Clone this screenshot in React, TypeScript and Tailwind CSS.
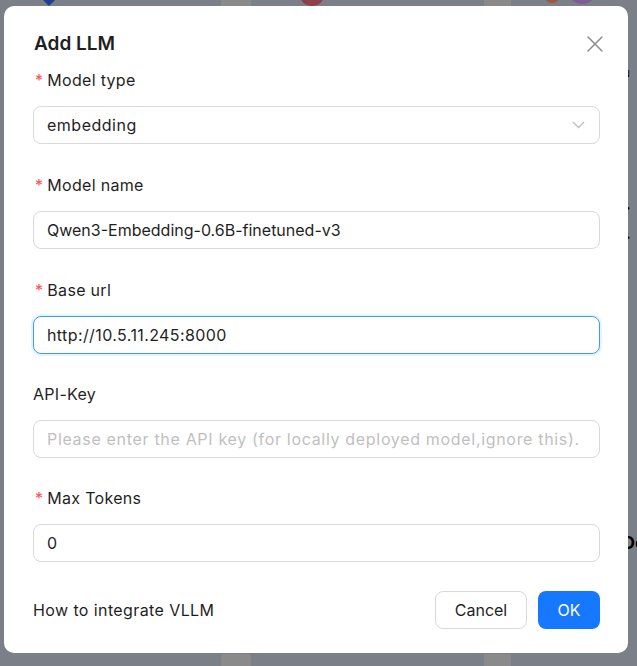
import React from "react";

const font = { fontFamily: "Inter, 'Noto Sans', sans-serif" };

function Label({ text, required }: { text: string; required?: boolean }) {
  return (
    <div className="flex h-[24px] items-center mb-[14px] text-[16px] leading-[24px] text-[#1f1f1f] tracking-[0.3px]">
      {required && <span className="text-[#ff4d4f] mr-[4px] ml-[2px] text-[16px]">*</span>}
      <span>{text}</span>
    </div>
  );
}

export default function App() {
  return (
    <div className="relative w-[637px] h-[666px] overflow-hidden bg-[#7b8088]" style={font}>
      {/* faint page content under the mask */}
      <div className="absolute left-[44px] top-[-6px] w-[10px] h-[10px] rotate-45 bg-[#1f3f8f]" />
      <div className="absolute left-[221px] top-0 w-[30px] h-[8px] bg-[#8a8a8a]" />
      <div className="absolute left-[221px] top-[654px] w-[30px] h-[12px] bg-[#8a8a8a]" />
      <div className="absolute left-[299px] top-[-20px] w-[26px] h-[26px] rounded-full bg-[#8f4048]" />
      <div className="absolute left-[484px] top-0 w-[27px] h-[8px] bg-[#8a8a8a]" />
      <div className="absolute left-[484px] top-[654px] w-[27px] h-[12px] bg-[#8a8a8a]" />
      <div className="absolute left-[544px] top-[-13px] w-[16px] h-[16px] rounded-full bg-[#a3553c]" />
      <div className="absolute left-[567px] top-[-26px] w-[30px] h-[30px] rounded-full bg-[#7b5c93]" />
      <div className="absolute left-[592px] top-[202px] w-[44px] h-[42px] rounded-full border-[7px] border-black border-r-transparent" />
      <div className="absolute left-[622px] top-[534px] text-[18px] font-bold text-black leading-none">Do</div>
      <div className="absolute left-[614px] top-[69px] text-[9px] text-black leading-none">DIN</div>

      {/* modal */}
      <div className="absolute left-[4px] top-[6px] w-[624px] h-[647px] bg-white rounded-[10px] pt-[26px] pl-[29px] pr-[28px] pb-[24px] flex flex-col">
        <div className="flex items-center justify-between h-[24px] mb-[12px]">
          <div className="text-[19px] font-semibold text-[#1f1f1f] leading-[24px] ml-[1px]">Add LLM</div>
          <svg width="16" height="16" viewBox="0 0 16 16" className="mr-[-3px]">
            <path d="M1 1L15 15M15 1L1 15" stroke="#8c8c8c" strokeWidth="1.5" strokeLinecap="round" />
          </svg>
        </div>

        <div className="mb-[29px]">
          <Label text="Model type" required />
          <div className="h-[38px] rounded-[8px] border border-[#d9d9d9] flex items-center justify-between pl-[13px] pr-[14px] text-[16px] text-[#1f1f1f]">
            <span className="tracking-[0.5px]">embedding</span>
            <svg width="13" height="8" viewBox="0 0 13 8">
              <path d="M1 1L6.5 6.5L12 1" stroke="#bfbfbf" strokeWidth="1.3" fill="none" />
            </svg>
          </div>
        </div>

        <div className="mb-[29px]">
          <Label text="Model name" required />
          <div className="h-[38px] rounded-[8px] border border-[#d9d9d9] flex items-center pl-[13px] text-[16px] text-[#1f1f1f]">
            Qwen3-Embedding-0.6B-finetuned-v3
          </div>
        </div>

        <div className="mb-[28px]">
          <Label text="Base url" required />
          <div className="h-[38px] rounded-[8px] border border-[#4096ff] shadow-[0_0_0_2px_rgba(5,145,255,0.1)] flex items-center pl-[13px] text-[16px] text-[#1f1f1f] tracking-[0.4px]">
            http://10.5.11.245:8000
          </div>
        </div>

        <div className="mb-[28px]">
          <Label text="API-Key" />
          <div className="h-[38px] rounded-[8px] border border-[#d9d9d9] flex items-center pl-[13px] text-[16px] text-[#bfbfbf] tracking-[0.68px] whitespace-nowrap overflow-hidden">
            Please enter the API key (for locally deployed model,ignore this).
          </div>
        </div>

        <div className="mb-[29px]">
          <Label text="Max Tokens" required />
          <div className="h-[38px] rounded-[8px] border border-[#d9d9d9] flex items-center pl-[13px] text-[16px] text-[#1f1f1f]">
            0
          </div>
        </div>

        <div className="flex items-center justify-between">
          <div className="text-[16px] text-[#1f1f1f] tracking-[0.4px]">How to integrate VLLM</div>
          <div className="flex gap-[11px]">
            <button className="h-[38px] w-[92px] rounded-[8px] border border-[#d9d9d9] bg-white text-[16px] text-[#1f1f1f]">
              Cancel
            </button>
            <button className="h-[38px] w-[62px] rounded-[8px] bg-[#1677ff] text-[16px] text-white">
              OK
            </button>
          </div>
        </div>
      </div>
    </div>
  );
}
